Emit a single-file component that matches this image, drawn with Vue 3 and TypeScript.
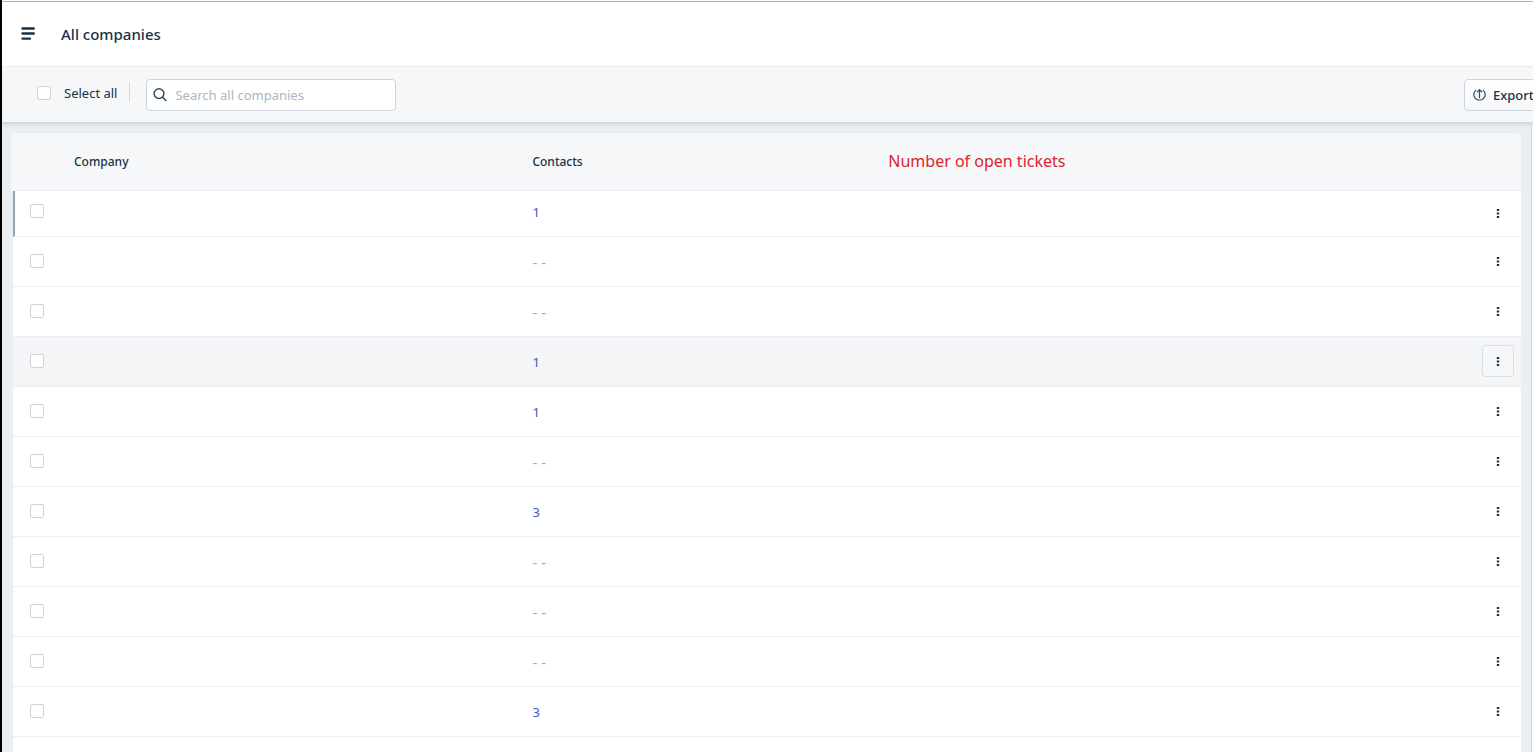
<script setup lang="ts">
import { ref } from 'vue'

interface Company {
  id: number
  contacts: number | null
  active?: boolean
  current?: boolean
}

const counts: (number | null)[] = [1, 0, 0, 1, 1, 0, 3, 0, 0, 0, 3, null]
const companies: Company[] = counts.map((contacts, i) => ({
  id: i + 1,
  contacts,
  current: i === 0,
  active: i === 3,
}))
const selected = ref<number[]>([])
const query = ref('')

function toggleAll(event: Event): void {
  const checked = (event.target as HTMLInputElement).checked
  selected.value = checked ? companies.map((c) => c.id) : []
}
</script>

<template>
  <div class="page">
    <header class="topbar">
      <button class="menu" type="button" aria-label="Menu">
        <svg width="14" height="14" viewBox="0 0 14 14" fill="none" stroke="#183247" stroke-width="2.4" stroke-linecap="round">
          <path d="M1.5 1.5h11.3M1.5 6.5h11.3M1.5 11.6h7.4" />
        </svg>
      </button>
      <h1>All companies</h1>
    </header>

    <div class="toolbar">
      <label class="select-all">
        <input type="checkbox" @change="toggleAll" />
        <span>Select all</span>
      </label>
      <span class="divider"></span>
      <label class="search">
        <svg width="14" height="14" viewBox="0 0 14 14" fill="none" stroke="#264966" stroke-width="1.4" stroke-linecap="round">
          <circle cx="6" cy="5.6" r="4.9" />
          <path d="M9.6 9.2L13 12.6" />
        </svg>
        <input v-model="query" type="text" placeholder="Search all companies" aria-label="Search all companies" />
      </label>
      <button class="export" type="button">
        <svg width="13" height="13" viewBox="0 0 13 13" fill="none" stroke="#264966" stroke-width="1.2" stroke-linecap="round" stroke-linejoin="round">
          <path d="M2.7 2.4a5.7 5.5 0 1 0 7.6 0M6.5 9.6V1.6M4.2 3.9L6.5 1.6L8.8 3.9" />
        </svg>
        <span>Export</span>
      </button>
    </div>

    <main class="content">
      <table>
        <thead>
          <tr>
            <th class="check"></th>
            <th class="company" scope="col">Company</th>
            <th class="contacts" scope="col">Contacts</th>
            <th class="tickets" scope="col">Number of open tickets</th>
            <th class="actions"></th>
          </tr>
        </thead>
        <tbody>
          <tr v-for="c in companies" :key="c.id" :class="{ current: c.current, active: c.active }">
            <td class="check">
              <input v-model="selected" type="checkbox" :value="c.id" aria-label="Select company" />
            </td>
            <td></td>
            <td>
              <a v-if="c.contacts" href="#">{{ c.contacts }}</a>
              <span v-else-if="c.contacts === 0" class="none">- -</span>
            </td>
            <td></td>
            <td class="actions">
              <button type="button" aria-label="More actions">
                <svg width="4" height="10" viewBox="0 0 4 10" fill="#183247">
                  <path d="M.8 1h2.4v2H.8zM.8 4.5h2.4v2H.8zM.8 8h2.4v2H.8z" />
                </svg>
              </button>
            </td>
          </tr>
        </tbody>
      </table>
    </main>
  </div>
</template>

<style>
html,
body {
  height: 100%;
  margin: 0;
  overflow: hidden;
}
#app {
  height: 100%;
}
</style>

<style scoped>
.page {
  box-sizing: border-box;
  display: flex;
  flex-direction: column;
  height: 100vh;
  overflow: hidden;
  padding-top: 1px;
  border-left: 2px solid #000;
  background: #fff;
  color: #183247;
  font-family: "Noto Sans", "Open Sans", sans-serif;
  font-size: 13px;
}
button {
  padding: 0;
  border: 0;
  background: none;
  color: inherit;
  font: inherit;
}
svg {
  display: block;
  flex: none;
}
.topbar {
  display: flex;
  align-items: center;
  gap: 26px;
  flex: none;
  height: 64px;
  padding-left: 19px;
  border-top: 1px solid #b0b0b4;
  border-bottom: 1px solid #ebeff3;
}
h1 {
  margin: 0;
  font-size: 15px;
  font-weight: 500;
  line-height: 20px;
}
.toolbar {
  position: relative;
  display: flex;
  align-items: center;
  flex: none;
  height: 55px;
  padding-left: 35px;
  border-bottom: 1px solid #cfd7df;
  background: #f5f7f9;
  box-shadow: 0 2px 4px #cfd7df;
}
input[type="checkbox"] {
  appearance: none;
  box-sizing: border-box;
  display: block;
  flex: none;
  width: 14px;
  height: 14px;
  margin: 0;
  border: 1px solid #cfd3d8;
  border-radius: 2px;
  background: #fff;
}
input[type="checkbox"]:checked {
  background: #2c5cc5;
}
.select-all {
  display: flex;
  align-items: center;
  gap: 13px;
  padding-bottom: 3px;
}
.divider {
  height: 20px;
  margin: 0 16px 5px 12px;
  border-left: 1px solid #cfd7df;
}
.search {
  box-sizing: border-box;
  display: flex;
  align-items: center;
  gap: 8px;
  width: 250px;
  height: 32px;
  padding: 0 6px;
  border: 1px solid #cfd3dc;
  border-radius: 4px;
  background: #fff;
}
.search input {
  flex: 1;
  min-width: 0;
  padding: 0;
  border: 0;
  outline: 0;
  background: none;
  color: inherit;
  font: inherit;
}
.search input::placeholder {
  color: #a9b6c3;
  opacity: 1;
}
.export {
  box-sizing: border-box;
  display: flex;
  align-items: center;
  flex: none;
  gap: 7px;
  width: 84px;
  height: 32px;
  margin: 0 -15px 0 auto;
  padding-left: 8px;
  border: 1px solid #cfd3dc;
  border-radius: 4px;
  background: linear-gradient(#fff, #f5f7f9);
  font-weight: 500;
}
.content {
  flex: 1;
  min-height: 0;
  margin-right: 1px;
  padding: 10px 10px 0 11px;
  overflow: hidden;
  border-right: 1px solid #cfd7df;
  background: #ebeff3;
}
table {
  width: 100%;
  table-layout: fixed;
  border-spacing: 0;
}
th,
td {
  box-sizing: border-box;
  height: 50px;
  padding: 0;
  border-bottom: 1px solid #ebeff3;
  text-align: left;
}
th {
  height: 58px;
  background: #f5f7f9;
  font-size: 12px;
  font-weight: 500;
}
th:first-child {
  border-top-left-radius: 4px;
  box-shadow: -2px 0 0 #f5f7f9;
}
th:last-child {
  border-top-right-radius: 4px;
}
td {
  background: #fff;
  font-size: 13px;
}
.check {
  padding: 0 0 2px 17px;
}
th.check {
  width: 61px;
}
th.company {
  width: 30.4%;
}
th.contacts {
  width: 23.6%;
}
th.tickets {
  padding-bottom: 2px;
  color: #d9262f;
  font-size: 16px;
  font-weight: 400;
}
th.actions {
  width: 39px;
}
.current td {
  height: 46px;
  padding-bottom: 4px;
}
.current td:first-child {
  padding: 0 0 6px 15px;
  border-left: 2px solid #92a2b1;
}
td.actions {
  padding-bottom: 1px;
}
.active td {
  background: #f3f5f7;
}
a {
  color: #3a5cb8;
  text-decoration: none;
}
.none {
  color: #a5abb3;
  font-size: 15px;
}
.actions button {
  box-sizing: border-box;
  display: flex;
  align-items: center;
  justify-content: center;
  width: 32px;
  height: 32px;
  border: 1px solid transparent;
  border-radius: 4px;
}
.active .actions button {
  border-color: #dadfe4;
  background: #f5f7f9;
}
</style>
